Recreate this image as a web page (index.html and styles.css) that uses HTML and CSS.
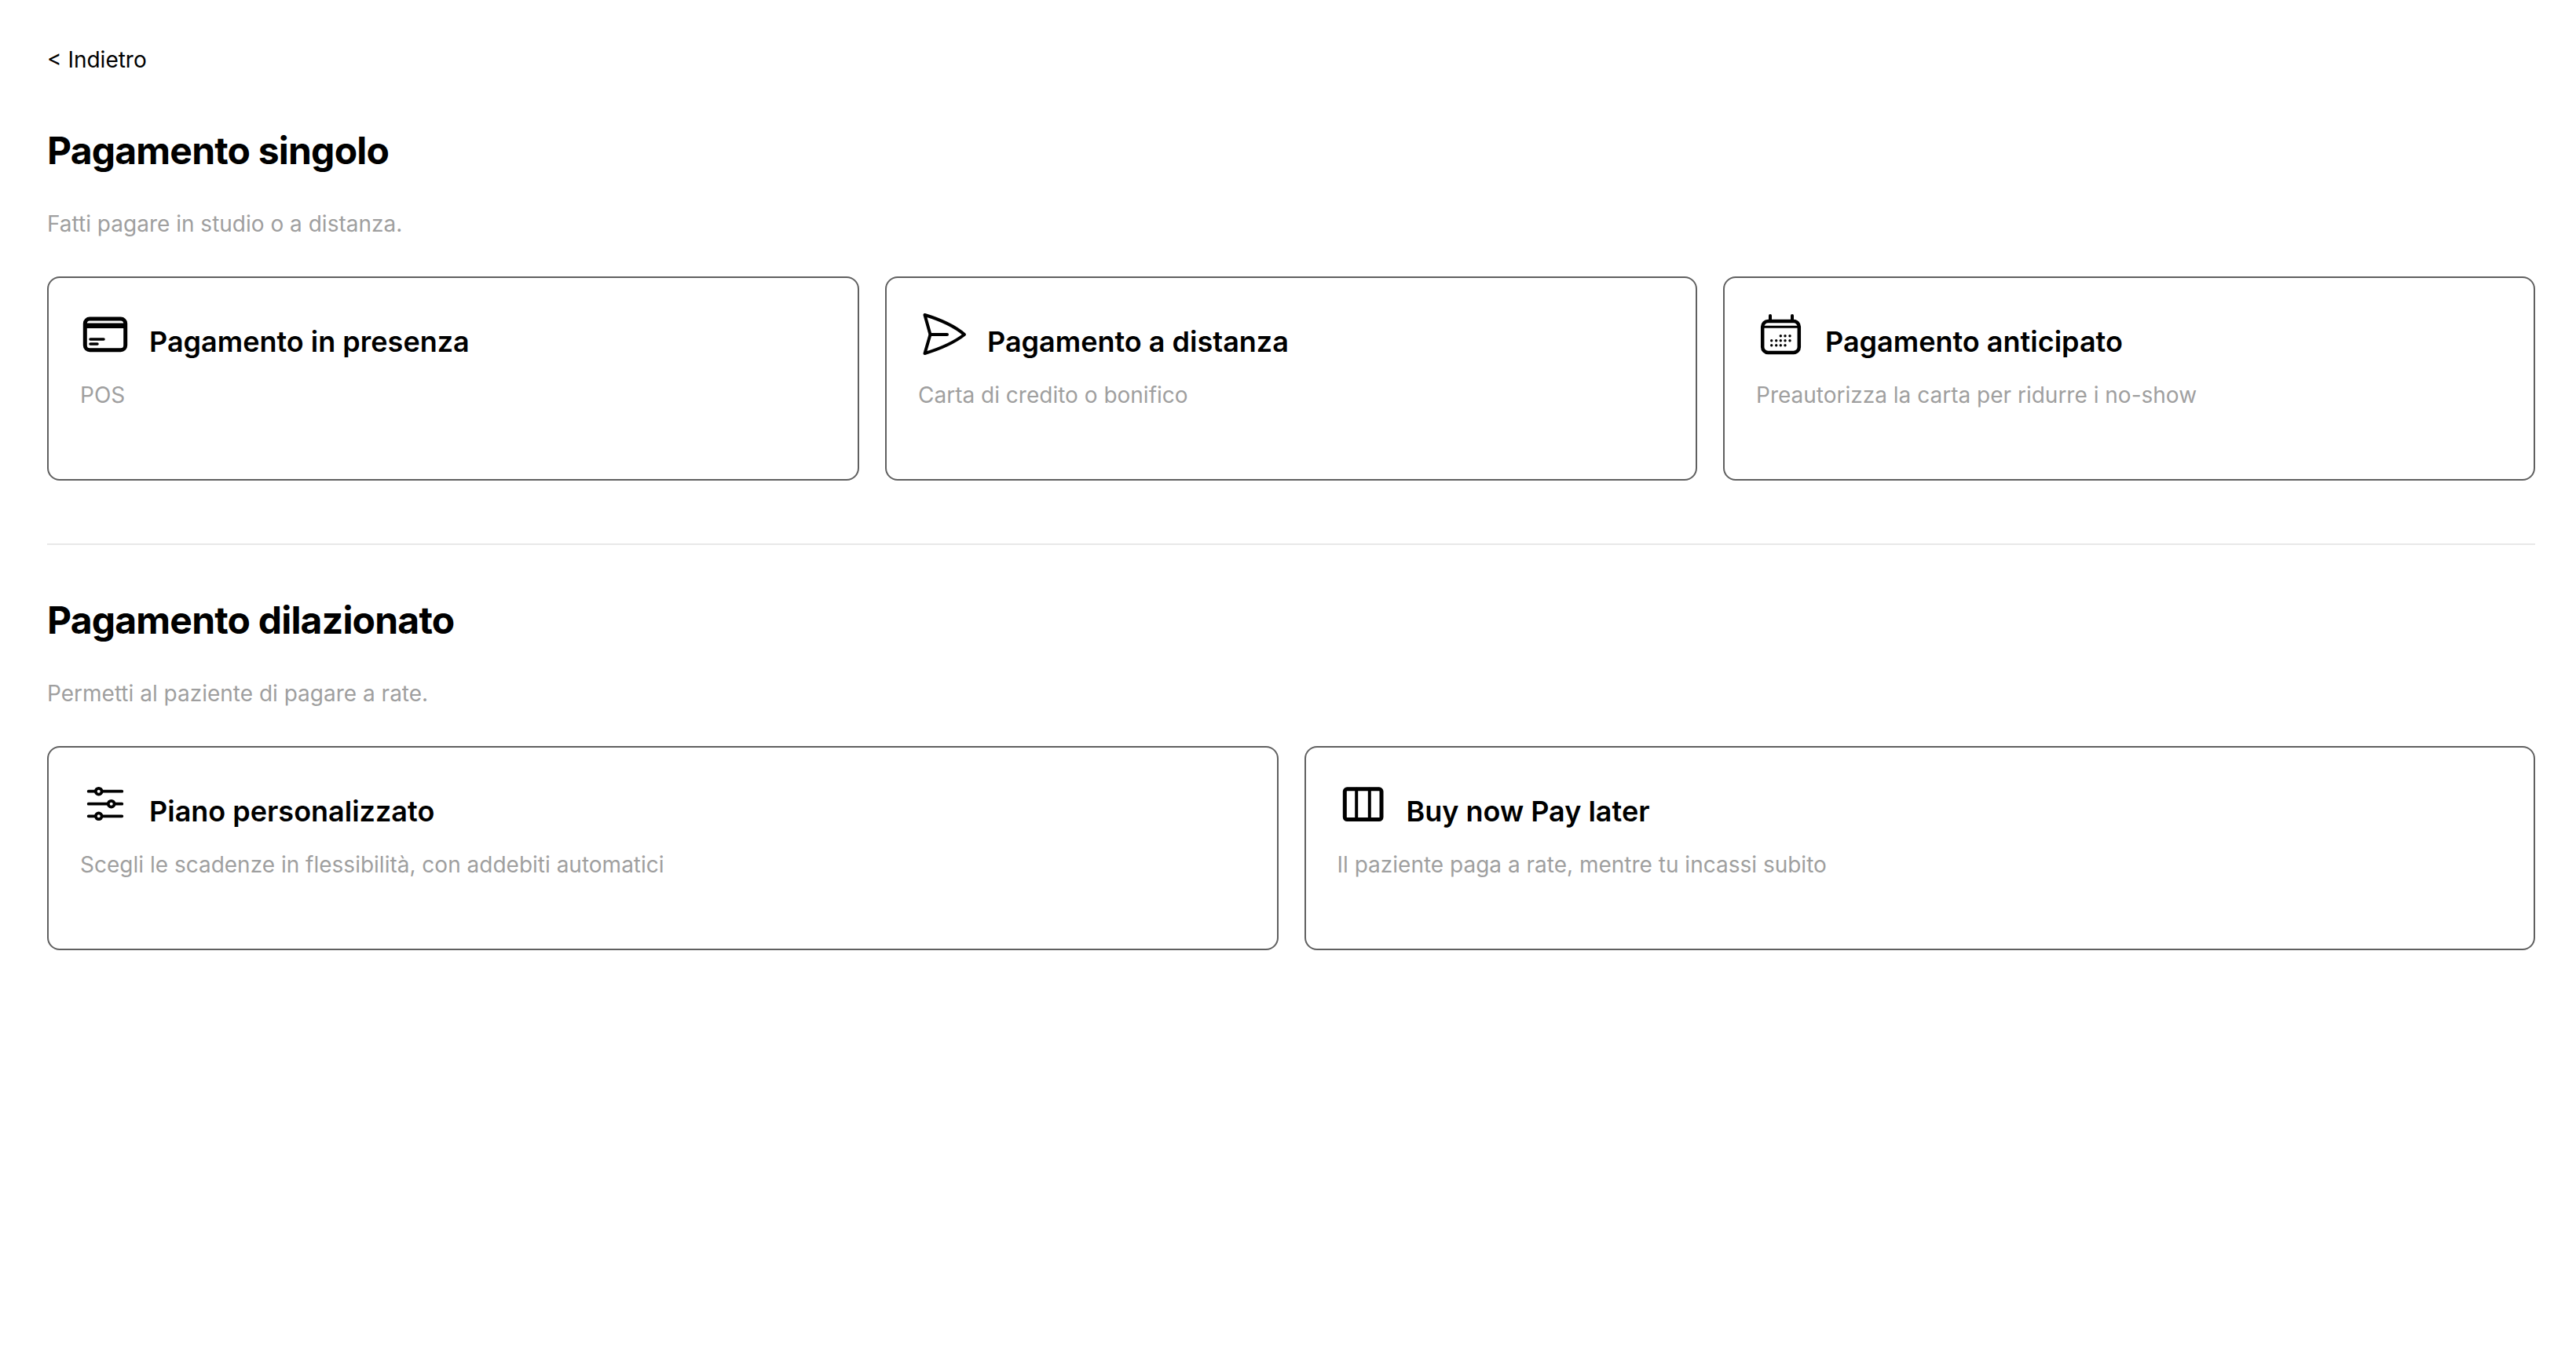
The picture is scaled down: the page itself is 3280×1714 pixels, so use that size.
FILE: index.html
```html
<!DOCTYPE html>
<html lang="it">
<head>
    <meta charset="UTF-8">
    <title>Pagamenti</title>
    <link rel="stylesheet" href="styles.css">
</head>
<body>
    <a class="back-link" href="#">&lt; Indietro</a>

    <section class="group">
        <h2>Pagamento singolo</h2>
        <p class="group-sub">Fatti pagare in studio o a distanza.</p>
        <div class="cards cards-3">
            <div class="card">
                <div class="card-head">
                    <svg class="icon" viewBox="0 0 64 64">
                        <rect x="6.3" y="12" width="51.4" height="39.7" rx="6"/>
                        <path d="M6.3 20.8H57.7" stroke-width="6.5" stroke-linecap="butt"/>
                        <path d="M13 38H30M13 44H22" stroke-width="3.5"/>
                    </svg>
                    <h3>Pagamento in presenza</h3>
                </div>
                <p class="card-sub">POS</p>
            </div>
            <div class="card">
                <div class="card-head">
                    <svg class="icon" viewBox="0 0 64 64">
                        <path d="M8.5 7L15.5 32L8.5 56C25 51 45 43 59 32C45 20 25 12 8.5 7Z" stroke-width="4"/>
                        <path d="M15.5 32H37" stroke-width="4"/>
                    </svg>
                    <h3>Pagamento a distanza</h3>
                </div>
                <p class="card-sub">Carta di credito o bonifico</p>
            </div>
            <div class="card">
                <div class="card-head">
                    <svg class="icon" viewBox="0 0 64 64">
                        <rect x="8.2" y="15" width="46.6" height="40" rx="7" stroke-width="4.5"/>
                        <path d="M8.2 22.3H54.8" stroke-width="3" stroke-linecap="butt"/>
                        <path d="M18 8V14M46 8V14" stroke-width="4"/>
                        <g class="dots">
                            <circle cx="31.3" cy="33.7" r="1.7"/><circle cx="37" cy="33.7" r="1.7"/><circle cx="43" cy="33.7" r="1.7"/>
                            <circle cx="19.7" cy="39.7" r="1.7"/><circle cx="25.7" cy="39.7" r="1.7"/><circle cx="31.3" cy="39.7" r="1.7"/><circle cx="37" cy="39.7" r="1.7"/><circle cx="43" cy="39.7" r="1.7"/>
                            <circle cx="19.7" cy="45.7" r="1.7"/><circle cx="25.7" cy="45.7" r="1.7"/><circle cx="31.3" cy="45.7" r="1.7"/><circle cx="37" cy="45.7" r="1.7"/>
                        </g>
                    </svg>
                    <h3>Pagamento anticipato</h3>
                </div>
                <p class="card-sub">Preautorizza la carta per ridurre i no-show</p>
            </div>
        </div>
    </section>

    <hr class="divider">

    <section class="group">
        <h2>Pagamento dilazionato</h2>
        <p class="group-sub">Permetti al paziente di pagare a rate.</p>
        <div class="cards cards-2">
            <div class="card">
                <div class="card-head">
                    <svg class="icon" viewBox="0 0 64 64">
                        <path d="M10.7 15.7H53.3M10.7 31.7H53.3M10.7 47.3H53.3" stroke-width="3.8"/>
                        <circle class="knob" cx="23.7" cy="15.7" r="3.9"/>
                        <circle class="knob" cx="39.7" cy="31.7" r="3.9"/>
                        <circle class="knob" cx="23.7" cy="47.3" r="3.9"/>
                    </svg>
                    <h3>Piano personalizzato</h3>
                </div>
                <p class="card-sub">Scegli le scadenze in flessibilità, con addebiti automatici</p>
            </div>
            <div class="card">
                <div class="card-head">
                    <svg class="icon" viewBox="0 0 64 64">
                        <rect x="9.3" y="12.8" width="46.7" height="38.7" rx="3"/>
                        <path d="M24.2 12.8V51.5M40.8 12.8V51.5" stroke-width="4"/>
                    </svg>
                    <h3>Buy now Pay later</h3>
                </div>
                <p class="card-sub">Il paziente paga a rate, mentre tu incassi subito</p>
            </div>
        </div>
    </section>
</body>
</html>
```

FILE: styles.css
```css
body {
    margin: 0;
    padding: 56px 52px 0 60px;
    background: #fff;
    color: #000;
    font-family: "Inter", "Liberation Sans", sans-serif;
}

.back-link {
    display: block;
    font-size: 28px;
    line-height: 40px;
    color: #000;
    text-decoration: none;
}

h2 {
    margin: 0;
    font-size: 48px;
    font-weight: 700;
    line-height: 60px;
    letter-spacing: -0.8px;
}

.group {
    margin-top: 66px;
}

.group-sub {
    margin: 43px 0 0;
    font-size: 28px;
    line-height: 40px;
    color: #9f9f9f;
}

.cards {
    display: grid;
    gap: 33px;
    margin-top: 47px;
}

.cards-3 {
    grid-template-columns: repeat(3, 1fr);
}

.cards-2 {
    grid-template-columns: repeat(2, 1fr);
}

.card {
    box-sizing: border-box;
    height: 260px;
    padding: 40px;
    border: 2px solid #606060;
    border-radius: 16px;
}

.card-head {
    display: flex;
    align-items: flex-end;
    gap: 24px;
}

.icon {
    flex: none;
    width: 64px;
    height: 64px;
    fill: none;
    stroke: #000;
    stroke-width: 5;
    stroke-linecap: round;
    stroke-linejoin: round;
}

.dots {
    fill: #000;
    stroke: none;
}

.knob {
    fill: #fff;
    stroke-width: 3.8;
}

h3 {
    margin: 0 0 1px;
    font-size: 36px;
    font-weight: 600;
    line-height: 44px;
}

.card-sub {
    margin: 25px 0 0;
    font-size: 28px;
    line-height: 40px;
    color: #9f9f9f;
}

.divider {
    height: 2px;
    margin: 80px 0 0;
    border: 0;
    background: #e8e8e8;
}
```
